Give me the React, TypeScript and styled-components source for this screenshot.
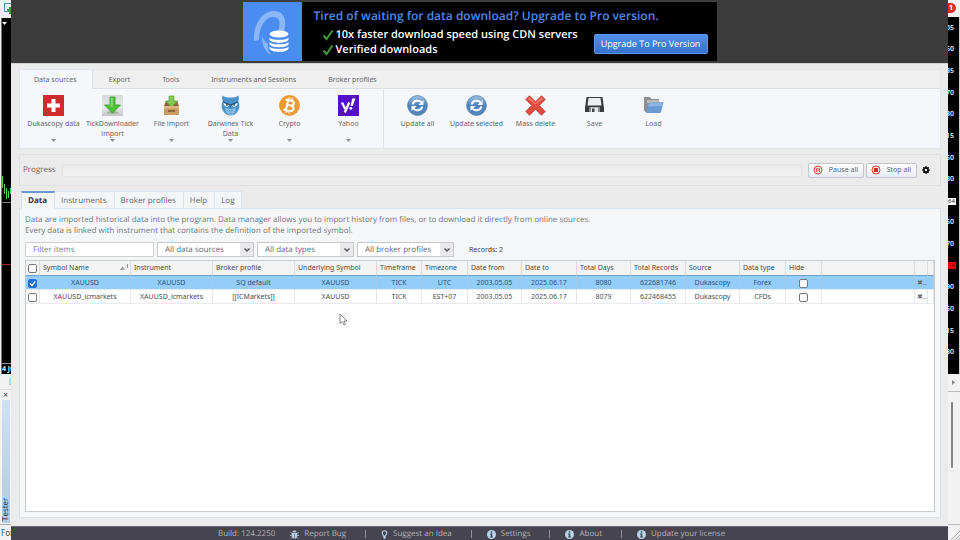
import React from "react";
import styled, { createGlobalStyle, css } from "styled-components";

const Global = createGlobalStyle`
  * { box-sizing: border-box; }
  html, body { margin: 0; padding: 0; background: #ebebeb; }
  body, button, input, select, table {
    font-family: "Noto Sans", "Open Sans", sans-serif;
    font-size: 7px;
    line-height: 10px;
    color: #66696d;
  }
  button, input, select { margin: 0; }
`;

const wideFace = css`
  font-family: "Open Sans", "Noto Sans", sans-serif;
  font-size: 8px;
  text-rendering: geometricPrecision;
`;

/* ---------- window frame ---------- */

const Desktop = styled.div`
  display: grid;
  grid-template-columns: 11px minmax(0, 1fr) 12px;
  min-height: 100vh;
  background: #f0f0f0;
`;

const Edge = styled.aside`
  display: flex;
  flex-direction: column;
  overflow: hidden;
  background: #f2f2f2;
`;

const ToolStub = styled.div`
  height: 18px;
  padding: 2px 0 0 4px;
  background: #f0f0f0;
`;

const ChartStub = styled.div`
  display: flex;
  flex-direction: column;
  height: 356px;
  margin-left: 1px;
  border-left: 1px solid #777;
  background: #000;
`;

const ChartDate = styled.div`
  height: 11px;
  border-top: 1px solid #999;
  font-size: 7px;
  font-weight: 600;
  white-space: nowrap;
  color: #fff;
`;

const ScrollTick = styled.div`
  height: 16px;
  padding: 2px 0 0 8px;
  border-bottom: 1px solid #ddd;
`;

const CloseTester = styled.button`
  width: 11px;
  height: 10px;
  padding: 0;
  border: 0;
  background: none;
  color: #444;
  font-size: 9px;
  line-height: 8px;
`;

const TesterTab = styled.div`
  ${wideFace}
  flex: 1;
  display: flex;
  align-items: center;
  margin: 0 1px 1px 2px;
  padding-top: 2px;
  background: linear-gradient(#b4c9dd, #cfe1f4);
  writing-mode: vertical-rl;
  transform: rotate(180deg);
  line-height: 8px;
  color: #222;
`;

const StatusStub = styled.div`
  height: 16px;
  padding: 3px 0 0 1px;
  border-top: 1px solid #aaa;
  font-size: 8px;
  white-space: nowrap;
  color: #555;
`;

const BadgeArea = styled.div`
  height: 17px;
  padding-top: 3px;
`;

const Badge = styled.div`
  width: 8px;
  height: 10px;
  padding-left: 1px;
  border-radius: 0 5px 5px 0;
  background: #d8341f;
  color: #fff;
  font-weight: 700;
`;

const PriceAxis = styled.div`
  position: relative;
  display: flex;
  flex-direction: column;
  height: 357px;
  padding-bottom: 11px;
  border-right: 1px solid #ccc;
  background: #000;
`;

const Price = styled.div`
  flex: 1;
  display: flex;
  align-items: center;
  justify-content: flex-end;
  padding-right: 5px;
  font-weight: 600;
  color: #eee;
`;

const Marker = styled.div<{ $top: number; $red?: boolean }>`
  position: absolute;
  left: 0;
  top: ${(p) => p.$top}px;
  width: 8px;
  height: 7px;
  font-size: 6px;
  line-height: 7px;
  background: ${(p) => (p.$red ? "#f00" : "#fff")};
  color: ${(p) => (p.$red ? "#700" : "#222")};
`;

const ScrollArrow = styled.div`
  height: 18px;
  display: grid;
  place-items: center end;
  padding-right: 5px;
  border-bottom: 1px solid #bbb;
`;

const ScrollBox = styled.div`
  flex: 1;
  padding: 10px 6px 0 3px;
`;

const ScrollThumb = styled.div`
  height: 66px;
  width: 2px;
  border-radius: 1px;
  background: #858585;
`;

const Grip = styled.div`
  display: flex;
  align-items: flex-end;
  justify-content: flex-end;
  height: 16px;
  border-top: 1px solid #bbb;
`;

const Window = styled.div`
  display: flex;
  flex-direction: column;
  min-width: 0;
  background: #ebebeb;
`;

/* ---------- banner ---------- */

const BannerBar = styled.header`
  display: flex;
  justify-content: center;
  padding: 2px 0;
  background: #3c3c3c;
  border-bottom: 1px solid #cfcfcf;
`;

const Banner = styled.section`
  display: flex;
  width: 474px;
  height: 59px;
  background: #000;
`;

const BannerText = styled.div`
  flex: 1;
  padding: 5px 0 0 12px;
`;

const BannerTitle = styled.h1`
  ${wideFace}
  margin: 0;
  font-size: 12px;
  line-height: 17px;
  font-weight: 600;
  white-space: nowrap;
  color: #4f88ea;
`;

const BannerRow = styled.div`
  display: flex;
  justify-content: space-between;
  align-items: flex-end;
  padding-right: 9px;
`;

const Benefits = styled.ul`
  margin: 3px 0 0 8px;
  padding: 0;
  list-style: none;
`;

const Benefit = styled.li`
  ${wideFace}
  display: flex;
  align-items: center;
  gap: 2px;
  font-size: 11px;
  line-height: 15px;
  font-weight: 600;
  white-space: nowrap;
  color: #fff;
`;

const UpgradeButton = styled.button`
  ${wideFace}
  flex: none;
  width: 114px;
  height: 20px;
  padding: 0;
  margin-bottom: 3px;
  border: 1px solid #5c98ea;
  border-radius: 2px;
  background: linear-gradient(#4f8fe8, #3672cb);
  color: #fff;
  font-size: 9px;
  font-weight: 400;
  white-space: nowrap;
`;

/* ---------- ribbon ---------- */

const Content = styled.main`
  flex: 1;
  display: flex;
  flex-direction: column;
  padding: 5px 7px 8px 8px;
`;

const Ribbon = styled.section`
  border: 1px solid #e3e6ea;
  background: #f5f7fa;
`;

const RibbonTabs = styled.nav`
  display: flex;
  height: 19px;
  background: #efefef;
`;

const RibbonTab = styled.button<{ $active?: boolean }>`
  padding: 1px 16px 0;
  border: 0;
  border-bottom: 1px solid #d9dfe6;
  background: none;
  white-space: nowrap;
  ${(p) =>
    p.$active &&
    css`
      padding: 1px 15px 0 14px;
      border-right: 1px solid #d9dfe6;
      border-bottom-color: #f5f7fa;
      background: #f5f7fa;
    `}
`;

const RibbonRest = styled.div`
  flex: 1;
  border-bottom: 1px solid #d9dfe6;
`;

const RibbonTools = styled.div`
  display: flex;
  height: 59px;
`;

const ToolGroup = styled.div<{ $divided?: boolean }>`
  display: flex;
  padding: 0 5px 0 4px;
  border-right: ${(p) => (p.$divided ? "1px solid #dfe2e5" : "0")};
`;

const Tool = styled.button`
  display: flex;
  flex-direction: column;
  align-items: center;
  width: 59px;
  padding: 6px 0;
  border: 0;
  background: none;
  > svg:first-child { flex: none; margin-bottom: 3px; }
`;

const ToolLabel = styled.span`
  flex: 1;
`;

/* ---------- progress ---------- */

const ProgressRow = styled.section`
  display: flex;
  align-items: center;
  height: 32px;
  margin-top: 5px;
  padding: 0 10px 0 3px;
  border: 1px solid #dedfe0;
`;

const ProgressLabel = styled.span`
  ${wideFace}
`;

const Track = styled.div`
  flex: 1;
  height: 13px;
  margin: 0 6px;
  border-radius: 2px;
  border: 1px solid #e5e5e5;
  background: linear-gradient(#e9e9e9, #f2f2f2);
`;

const ActionButton = styled.button<{ $wide?: boolean }>`
  display: flex;
  align-items: center;
  justify-content: space-between;
  width: ${(p) => (p.$wide ? 56 : 51)}px;
  height: 15px;
  margin-right: 2px;
  padding: 0 5px 0 4px;
  border: 1px solid #c4c4ca;
  border-radius: 2px;
  background: linear-gradient(#fdfdff, #eaeaf2);
  white-space: nowrap;
`;

const GearButton = styled.button`
  display: grid;
  padding: 0;
  margin-left: 3px;
  border: 0;
  background: none;
`;

/* ---------- data panel ---------- */

const PanelTabs = styled.nav`
  display: flex;
  height: 18px;
  margin: 5px 0 -1px 2px;
`;

const PanelTab = styled.button<{ $active?: boolean }>`
  ${wideFace}
  position: relative;
  padding: 1px 7px 0 6px;
  border: 1px solid #dbe5ee;
  border-left-width: 0;
  background: #f4f5f6;
  white-space: nowrap;
  ${(p) =>
    p.$active &&
    css`
      padding: 0 7px 0 6px;
      border-top: 2px solid #6f97cf;
      border-bottom-color: #f5f6f8;
      border-left-width: 1px;
      background: #f5f6f8;
      color: #333;
      font-weight: 700;
    `}
`;

const Panel = styled.section`
  flex: 1;
  display: flex;
  flex-direction: column;
  padding: 5px;
  border: 1px solid #d6e2ee;
  background: #f5f6f8;
`;

const Description = styled.p`
  ${wideFace}
  margin: 0;
  line-height: 11px;
  color: #74787c;
`;

const Filters = styled.div`
  display: flex;
  align-items: center;
  gap: 3px;
  margin-top: 6px;
`;

const FilterInput = styled.input`
  ${wideFace}
  width: 129px;
  height: 15px;
  padding: 0 7px;
  border: 1px solid #d0d0d0;
  background: #fff;
  &::placeholder { color: #787c80; opacity: 1; }
`;

const SelectBox = styled.div`
  display: grid;
  width: 97px;
  grid-template-columns: 1fr 14px;
  > * { grid-row: 1; }
  > svg {
    grid-column: 2;
    align-self: center;
    justify-self: center;
    pointer-events: none;
  }
`;

const Select = styled.select`
  ${wideFace}
  grid-column: 1 / -1;
  height: 15px;
  padding: 0 7px;
  border: 1px solid #c9c9cc;
  border-radius: 0;
  appearance: none;
  background: linear-gradient(90deg, transparent calc(100% - 13px), #e9e9ec calc(100% - 13px)), #fff;
`;

const Records = styled.span`
  margin-left: 12px;
  color: #44484c;
`;

const Grid = styled.div`
  position: relative;
  flex: 1;
  margin-top: 3px;
  border: 1px solid #c8cccb;
  background: #fff;
`;

const Table = styled.table`
  width: 100%;
  table-layout: fixed;
  border-collapse: separate;
  border-spacing: 0;
  color: #4a4e52;
`;

const Col = styled.col<{ $w?: number }>`
  width: ${(p) => (p.$w ? `${p.$w}px` : "auto")};
`;

const Th = styled.th<{ $check?: boolean }>`
  height: 15px;
  padding: 0 0 0 ${(p) => (p.$check ? 0 : 3)}px;
  border-right: 1px solid #dcdcdc;
  border-bottom: 1px solid #6f9fce;
  background: #f3f3f3;
  font-weight: 400;
  text-align: left;
  white-space: nowrap;
`;

const SortHead = styled.div`
  display: flex;
  justify-content: space-between;
  align-items: center;
  padding-right: 1px;
`;

const Tr = styled.tr<{ $selected?: boolean }>`
  background: ${(p) => (p.$selected ? "#94cdfa" : "#fff")};
  color: ${(p) => (p.$selected ? "#2d5675" : "#4a4e52")};
`;

const Td = styled.td`
  height: 14px;
  padding: 0;
  border-right: 1px solid rgba(190, 200, 210, 0.45);
  border-bottom: 1px solid #e9ecef;
  text-align: center;
  white-space: nowrap;
  line-height: 8px;
`;

const Check = styled.input`
  appearance: none;
  display: block;
  width: 9px;
  height: 9px;
  margin: 1px auto 0;
  border: 1px solid #777;
  border-radius: 2px;
  background: #fff;
  &:checked {
    border-color: #1f6fe0;
    background: #1f6fe0;
  }
`;

const CheckCell = styled.div`
  display: grid;
  place-items: center;
  > * { grid-area: 1 / 1; }
  > svg { pointer-events: none; margin-top: 1px; visibility: hidden; }
  > input:checked + svg { visibility: visible; }
`;

const RemoveButton = styled.button`
  padding: 0 0 0 2px;
  border: 0;
  background: none;
  line-height: 8px;
  white-space: nowrap;
`;

const Pointer = styled.svg`
  position: absolute;
  left: 313px;
  top: 52px;
`;

/* ---------- footer ---------- */

const Footer = styled.footer`
  ${wideFace}
  display: flex;
  align-items: center;
  height: 14px;
  padding: 1px 0 0 207px;
  background: #46444f;
  color: #b2b2ba;
  white-space: nowrap;
  border-top: 1px solid #6d6c72;
`;

const FooterLink = styled.a`
  display: flex;
  align-items: center;
  gap: 5px;
  margin-left: 15px;
  color: inherit;
  text-decoration: none;
`;

const Bar = styled.span`
  width: 1px;
  height: 8px;
  margin-left: 19px;
  background: #92929a;
`;

/* ---------- drawings ---------- */

const BannerLogo = () => (
  <svg width="59" height="59" viewBox="0 0 59 59">
    <rect width="59" height="59" fill="#4a8cf0" />
    <path d="M11 39C10 24 18 10 30 9c12 0 14 10 11 21l-6-1c3-9 2-14-5-14-8 0-14 11-14 23z" fill="#8bb7f8" />
    <path d="M19 34c2 6 6 8 8 9v10c-5-4-8-10-8-19z" fill="#8bb7f8" />
    <path d="M25 31h22v17c0 6-22 6-22 0z" fill="#4a8cf0" />
    <g fill="#fff">
      <ellipse cx="36" cy="32" rx="9.500" ry="3.500" />
      {[34.5, 39, 43.5].map((y) => (
        <path key={y} d={`M26.500 ${y}c3 3.500 16 3.500 19 0v3c-1 4.500-18 4.500-19 0z`} />
      ))}
    </g>
    <g fill="none" stroke="#4a8cf0" strokeWidth="1.200">
      {[34.5, 39, 43.5].map((y) => (
        <path key={y} d={`M26 ${y}c3 3.500 17 3.500 20 0`} />
      ))}
    </g>
  </svg>
);

const Tick = () => (
  <svg width="12" height="12" viewBox="0 0 12 12">
    <path d="M1.500 6.500l3 3.500L10.500 1.500" fill="none" stroke="#3f9a3a" strokeWidth="2" />
  </svg>
);

const DownArrow = () => (
  <svg width="5" height="3" viewBox="0 0 5 3">
    <path d="M0 0h5L2.500 3z" fill="#8d8f92" />
  </svg>
);

const Chevron = () => (
  <svg width="8" height="6" viewBox="0 0 8 6">
    <path d="M1.500 1.500L4 4l2.500-2.500" fill="none" stroke="#555" strokeWidth="1.400" />
  </svg>
);

const icon = { width: 21, height: 21, viewBox: "0 0 21 21" };

const SwissIcon = () => (
  <svg {...icon}>
    <rect width="21" height="21" fill="#cf2a2c" />
    <path d="M8.500 4h4v4.500H17v4h-4.500V17h-4v-4.500H4v-4h4.500z" fill="#fff" />
  </svg>
);

const DownloadIcon = () => (
  <svg {...icon}>
    <defs>
      <linearGradient id="tile" x2="0" y2="1">
        <stop stopColor="#d8dadb" />
        <stop offset=".6" stopColor="#e6e8e8" />
        <stop offset="1" stopColor="#c2c5c4" />
      </linearGradient>
    </defs>
    <rect width="21" height="21" fill="url(#tile)" />
    <ellipse cx="10.500" cy="17.500" rx="6" ry="1.500" fill="#a6b0a4" />
    <path d="M8 2h5v8h5.500L10.500 18 2.500 10H8z" fill="#4fc038" stroke="#2f9c29" strokeWidth=".8" />
    <path d="M8.800 2.800h2V12L5 10.500h3.800z" fill="#a4e67e" opacity=".7" />
  </svg>
);

const BoxIcon = () => (
  <svg {...icon}>
    <path d="M5 6h11l2 5H3z" fill="#8c6238" />
    <path d="M8 1h5v5h3.500L10.500 12 4.500 6H8z" fill="#86c653" stroke="#5aa137" strokeWidth=".7" />
    <path d="M3 11h15v9H3z" fill="#c99a62" />
    <path d="M3 11h15v2.500H3z" fill="#dfb67f" />
    <path d="M7 15h7v2H7z" fill="#8f6538" />
  </svg>
);

const OwlIcon = () => (
  <svg {...icon}>
    <path d="M2.500 .5c2 1.800 5 2 8 2s6-.2 8-2c.6 2.500.3 4-.2 5.500 1.600 4 1.400 8-1 11-1.800 2.500-4 3.500-6.800 3.500S5.500 19.500 3.700 17c-2.400-3-2.600-7-1-11C2.200 4.500 1.900 3 2.500 .5z" fill="#4a93cb" />
    <path d="M5.500 13c3 1.500 7 1.500 10 0 .3 4-2 7-5 7s-5.300-3-5-7z" fill="#8fc1e4" />
    <path d="M3.500 7.500l5.500 2.300c-.3 3.200-5.200 2.700-5.500-2.300zM17.500 7.500L12 9.800c.3 3.200 5.200 2.700 5.500-2.300z" fill="#f2f8fc" />
    <path d="M3 6.300l7.500 3 7.500-3-.4 1.500-5.600 2.500h-3L3.400 7.800z" fill="#235b8e" />
    <circle cx="7" cy="9.900" r=".9" fill="#1d4468" />
    <circle cx="14" cy="9.900" r=".9" fill="#1d4468" />
    <path d="M9.700 10.800h1.600l-.8 2z" fill="#235b8e" />
    <path d="M7.500 15.500l1.300.8 1.200-.8 1 .8 1.200-.8 1.300.8M8.500 18l1.200.6 1.100-.6 1.200.6" stroke="#3f83ba" strokeWidth=".7" fill="none" />
  </svg>
);

const BitcoinIcon = () => (
  <svg {...icon}>
    <circle cx="10.500" cy="10.500" r="10.400" fill="#ee9a35" />
    <g transform="rotate(12 10.500 10.500)" fill="none" stroke="#fff" strokeWidth="2">
      <path d="M8 5v11M5.500 5.500h6c3.800 0 3.800 4.800 0 4.800H8h4c4.200 0 4.200 5.400 0 5.400H5.500" />
      <path d="M8.800 2.500v3M11.800 2.500v3M8.800 15.500v3M11.800 15.500v3" strokeWidth="1.300" />
    </g>
  </svg>
);

const YahooIcon = () => (
  <svg {...icon}>
    <rect width="21" height="21" fill="#5410c4" />
    <path d="M4 7.500l3.200 6.500M11.200 7.500L6.800 17.500" stroke="#fff" strokeWidth="2.300" fill="none" />
    <path d="M14.200 3.500h3.200L14.800 11h-2.200z" fill="#fff" />
    <circle cx="12.800" cy="13.300" r="1.400" fill="#fff" />
  </svg>
);

const RefreshIcon = () => (
  <svg {...icon}>
    <defs>
      <linearGradient id="orb" x2="0" y2="1">
        <stop stopColor="#a3c4e2" />
        <stop offset=".5" stopColor="#4c84bd" />
        <stop offset="1" stopColor="#5686b8" />
      </linearGradient>
    </defs>
    <circle cx="10.500" cy="10.500" r="9.900" fill="url(#orb)" stroke="#5a82ad" strokeWidth=".8" />
    <path d="M5.800 9.500C6.300 5.500 12 4.300 14.500 7.500M15.200 11.500c-.5 4-6.200 5.200-8.700 2" fill="none" stroke="#fff" strokeWidth="2" />
    <path d="M16.500 5v5h-5zM4.500 16v-5h5z" fill="#fff" />
  </svg>
);

const DeleteIcon = () => (
  <svg {...icon}>
    <path d="M4.500 .8L10.500 6.800 16.500 .8 20.200 4.500 14.200 10.500 20.200 16.500 16.500 20.200 10.500 14.200 4.500 20.200 .8 16.500 6.800 10.500 .8 4.500z" fill="#e34b3f" stroke="#b9302a" strokeWidth=".8" strokeLinejoin="round" />
    <path d="M4.500 2.500l6 6 6-6 1.500 1.500-7.500 5.500L3 4z" fill="#f39a8c" opacity=".7" />
  </svg>
);

const SaveIcon = () => (
  <svg {...icon}>
    <path d="M2.500 2h16L20 13v4H1v-4z" fill="#3b3b3d" />
    <path d="M4.500 3h12l1 7.500h-14z" fill="#eceeef" />
    <path d="M5 12h11v5H5z" fill="#8a8c8f" />
    <path d="M7 12.500h7V17H7z" fill="#e7e8ea" />
    <path d="M8 13.500h2.500V17H8z" fill="#444" />
  </svg>
);

const FolderIcon = () => (
  <svg {...icon}>
    <path d="M1 3c0-.6.400-1 1-1h5l1.500 2H16v13H3c-1 0-2-1-2-2z" fill="#8e9091" />
    <path d="M4 5h12v3H4z" fill="#b7babc" />
    <path d="M5.500 8l15-1-2.500 10c-.2.800-.6 1-1.500 1H3z" fill="#6c9bd2" />
    <path d="M6 8.500l13.800-1-.8 3.500-14 .5z" fill="#8db4e2" />
  </svg>
);

const CircleGlyph = ({ stop }: { stop?: boolean }) => (
  <svg width="10" height="10" viewBox="0 0 10 10">
    <circle cx="5" cy="5" r="4" fill="#fbe9e6" stroke="#d5493a" strokeWidth="1" />
    {stop ? (
      <path d="M3 3h4v4H3z" fill="#cf2f22" />
    ) : (
      <path d="M3.200 3h1.200v4H3.200zM5.600 3h1.200v4H5.600z" fill="#d5493a" />
    )}
  </svg>
);

const GearIcon = () => (
  <svg width="8" height="8" viewBox="0 0 8 8">
    <path d="M4 .3v7.400M.3 4h7.400M1.400 1.400l5.200 5.200M6.600 1.400L1.400 6.600" stroke="#000" strokeWidth="1.600" />
    <circle cx="4" cy="4" r="2.600" fill="#000" />
    <circle cx="4" cy="4" r="1.300" fill="#ebebeb" />
  </svg>
);

const BugIcon = () => (
  <svg width="9" height="9" viewBox="0 0 9 9">
    <path d="M2.500 2.300C2.500-.2 6.500-.2 6.500 2.300zM2 3h5v3.500C7 9.200 2 9.200 2 6.500z" fill="#b9d3ea" />
    <path d="M.5 2.500L2.500 3.700M8.500 2.500L6.500 3.700M0 5.300h9M1 8.500l1.500-1.700M8 8.500L6.500 6.800" stroke="#b9d3ea" strokeWidth=".9" />
    <path d="M4.500 4v4" stroke="#46444f" strokeWidth=".6" />
  </svg>
);

const BulbIcon = () => (
  <svg width="7" height="9" viewBox="0 0 7 9">
    <path d="M2.500 6C2.500 4.800 1.200 4.400 1.200 2.900 1.200 0 5.800 0 5.800 2.900 5.800 4.400 4.500 4.800 4.500 6z" fill="none" stroke="#b9d3ea" strokeWidth="1.100" />
    <path d="M2.300 6.200h2.400v2L3.500 9l-1.200-.8z" fill="#b9d3ea" />
  </svg>
);

const InfoIcon = () => (
  <svg width="9" height="9" viewBox="0 0 8 8">
    <circle cx="4" cy="4" r="4" fill="#b9d3ea" />
    <path d="M3.300 1.200h1.400v1.200H3.300zM2.800 3.200h1.900v2.500h.6v1H2.800v-1h.6V4.200h-.6z" fill="#3d4a5c" />
  </svg>
);

const SortIcon = () => (
  <svg width="9" height="8" viewBox="0 0 9 8">
    <path d="M0 6l2.500-4L5 6z" fill="#a0a3a6" />
    <path d="M6.500 1.500l1-.8V4" fill="none" stroke="#777" strokeWidth=".8" />
  </svg>
);

/* ---------- data ---------- */

const sources = [
  { label: "Dukascopy data", Icon: SwissIcon },
  { label: "TickDownloader import", Icon: DownloadIcon },
  { label: "File import", Icon: BoxIcon },
  { label: "Darwinex Tick Data", Icon: OwlIcon },
  { label: "Crypto", Icon: BitcoinIcon },
  { label: "Yahoo", Icon: YahooIcon },
];

const actions = [
  { label: "Update all", Icon: RefreshIcon },
  { label: "Update selected", Icon: RefreshIcon },
  { label: "Mass delete", Icon: DeleteIcon },
  { label: "Save", Icon: SaveIcon },
  { label: "Load", Icon: FolderIcon },
];

const columns: [string, number][] = [
  ["Instrument", 82],
  ["Broker profile", 82],
  ["Underlying Symbol", 82],
  ["Timeframe", 45],
  ["Timezone", 46],
  ["Date from", 54],
  ["Date to", 55],
  ["Total Days", 54],
  ["Total Records", 55],
  ["Source", 54],
  ["Data type", 46],
  ["Hide", 36],
];

const rows = [
  ["XAUUSD", "XAUUSD", "SQ default", "XAUUSD", "TICK", "UTC", "2003.05.05", "2025.06.17", "8080", "622681746", "Dukascopy", "Forex"],
  ["XAUUSD_icmarkets", "XAUUSD_icmarkets", "[[ICMarkets]]", "XAUUSD", "TICK", "EST+07", "2003.05.05", "2025.06.17", "8079", "622468455", "Dukascopy", "CFDs"],
];

const prices = ["65", "50", "35", "70", "30", "15", "50", "30", "", "50", "70", "", "90", "50", "15", "30"];

const filters = ["All data sources", "All data types", "All broker profiles"];

const footerLinks = [
  { label: "Report Bug", Icon: BugIcon },
  { label: "Suggest an Idea", Icon: BulbIcon },
  { label: "Settings", Icon: InfoIcon },
  { label: "About", Icon: InfoIcon },
  { label: "Update your license", Icon: InfoIcon },
];

const TickBox = ({ label, checked }: { label: string; checked?: boolean }) => (
  <CheckCell>
    <Check type="checkbox" aria-label={label} defaultChecked={checked} />
    <svg width="7" height="7" viewBox="0 0 7 7">
      <path d="M1 3.500l2 2L6.300 1.500" fill="none" stroke="#fff" strokeWidth="1.300" />
    </svg>
  </CheckCell>
);

export default function App() {
  return (
    <>
      <Global />
      <Desktop>
        <Edge>
          <ToolStub>
            <svg width="7" height="12" viewBox="0 0 7 12">
              <rect x=".5" y="1.500" width="9" height="8" fill="#e7f1f8" stroke="#4f8fc0" />
              <path d="M5 5h2v2h2v3H7v2H5v-2H3V7h2z" fill="#35a535" />
            </svg>
          </ToolStub>
          <ChartStub>
            <svg width="9" height="345" viewBox="0 0 9 345">
              <path d="M0 4h5L2.500 7z" fill="#fff" />
              <path d="M.5 158v12M2.500 166v10M4.500 170v11M6.500 173v7M8.500 170v6" stroke="#58d058" />
              <path d="M0 184.500h9" stroke="#777" />
              <path d="M0 246.500h9" stroke="#a22" />
            </svg>
            <ChartDate>4 Ju</ChartDate>
          </ChartStub>
          <ScrollTick>|</ScrollTick>
          <CloseTester aria-label="Close tester">×</CloseTester>
          <TesterTab>Tester</TesterTab>
          <StatusStub>For</StatusStub>
        </Edge>

        <Window>
          <BannerBar>
            <Banner>
              <BannerLogo />
              <BannerText>
                <BannerTitle>Tired of waiting for data download? Upgrade to Pro version.</BannerTitle>
                <BannerRow>
                  <Benefits>
                    <Benefit><Tick />10x faster download speed using CDN servers</Benefit>
                    <Benefit><Tick />Verified downloads</Benefit>
                  </Benefits>
                  <UpgradeButton>Upgrade To Pro Version</UpgradeButton>
                </BannerRow>
              </BannerText>
            </Banner>
          </BannerBar>

          <Content>
            <Ribbon>
              <RibbonTabs>
                <RibbonTab $active>Data sources</RibbonTab>
                {["Export", "Tools", "Instruments and Sessions", "Broker profiles"].map((t) => (
                  <RibbonTab key={t}>{t}</RibbonTab>
                ))}
                <RibbonRest />
              </RibbonTabs>
              <RibbonTools>
                <ToolGroup $divided>
                  {sources.map(({ label, Icon }) => (
                    <Tool key={label}>
                      <Icon />
                      <ToolLabel>{label}</ToolLabel>
                      <DownArrow />
                    </Tool>
                  ))}
                </ToolGroup>
                <ToolGroup>
                  {actions.map(({ label, Icon }) => (
                    <Tool key={label}>
                      <Icon />
                      <ToolLabel>{label}</ToolLabel>
                    </Tool>
                  ))}
                </ToolGroup>
              </RibbonTools>
            </Ribbon>

            <ProgressRow>
              <ProgressLabel>Progress</ProgressLabel>
              <Track role="progressbar" aria-label="Progress" aria-valuenow={0} />
              <ActionButton $wide><CircleGlyph />Pause all</ActionButton>
              <ActionButton><CircleGlyph stop />Stop all</ActionButton>
              <GearButton aria-label="Progress settings"><GearIcon /></GearButton>
            </ProgressRow>

            <PanelTabs>
              <PanelTab $active>Data</PanelTab>
              {["Instruments", "Broker profiles", "Help", "Log"].map((t) => (
                <PanelTab key={t}>{t}</PanelTab>
              ))}
            </PanelTabs>
            <Panel>
              <Description>
                Data are imported historical data into the program. Data manager allows you to import history from files, or to download it directly from online sources.
                <br />
                Every data is linked with instrument that contains the definition of the imported symbol.
              </Description>
              <Filters>
                <FilterInput placeholder="Filter items" aria-label="Filter items" />
                {filters.map((f) => (
                  <SelectBox key={f}>
                    <Select aria-label={f} defaultValue={f}>
                      <option>{f}</option>
                    </Select>
                    <Chevron />
                  </SelectBox>
                ))}
                <Records>Records: 2</Records>
              </Filters>
              <Grid>
                <Table>
                  <colgroup>
                    <Col $w={14} />
                    <Col $w={91} />
                    {columns.map(([name, w]) => <Col key={name} $w={w} />)}
                    <Col />
                    <Col $w={13} />
                    <Col $w={6} />
                  </colgroup>
                  <thead>
                    <tr>
                      <Th $check><TickBox label="Select all" /></Th>
                      <Th><SortHead>Symbol Name<SortIcon /></SortHead></Th>
                      {columns.map(([name]) => <Th key={name}>{name}</Th>)}
                      <Th /><Th /><Th />
                    </tr>
                  </thead>
                  <tbody>
                    {rows.map((cells, i) => (
                      <Tr key={cells[0]} $selected={i === 0}>
                        <Td><TickBox label={`Select ${cells[0]}`} checked={i === 0} /></Td>
                        {cells.map((c, j) => <Td key={j}>{c}</Td>)}
                        <Td><TickBox label={`Hide ${cells[0]}`} /></Td>
                        <Td />
                        <Td><RemoveButton aria-label={`Delete ${cells[0]}`}>✖..</RemoveButton></Td>
                        <Td />
                      </Tr>
                    ))}
                  </tbody>
                </Table>
                <Pointer width="9" height="13" viewBox="0 0 9 13">
                  <path d="M1 1v9.500l2.300-2L5 12l1.500-.7L5 8h3z" fill="#fff" stroke="#666" strokeWidth=".8" />
                </Pointer>
              </Grid>
            </Panel>
          </Content>

          <Footer>
            <span>Build: 124.2250</span>
            {footerLinks.map(({ label, Icon }, i) => (
              <React.Fragment key={label}>
                {i > 0 && <Bar />}
                <FooterLink href="#"><Icon />{label}</FooterLink>
              </React.Fragment>
            ))}
          </Footer>
        </Window>

        <Edge>
          <BadgeArea><Badge>1</Badge></BadgeArea>
          <PriceAxis>
            {prices.map((p, i) => <Price key={i}>{p}</Price>)}
            <Marker $top={181}>64</Marker>
            <Marker $top={245} $red>16</Marker>
          </PriceAxis>
          <ScrollArrow>
            <svg width="3" height="5" viewBox="0 0 3 5"><path d="M0 0l3 2.500L0 5z" fill="#888" /></svg>
          </ScrollArrow>
          <ScrollBox><ScrollThumb /></ScrollBox>
          <Grip>
            <svg width="9" height="9" viewBox="0 0 9 9">
              <path d="M0 9l9-9M4 9l5-5M7 9l2-2" stroke="#aaa" />
            </svg>
          </Grip>
        </Edge>
      </Desktop>
    </>
  );
}
